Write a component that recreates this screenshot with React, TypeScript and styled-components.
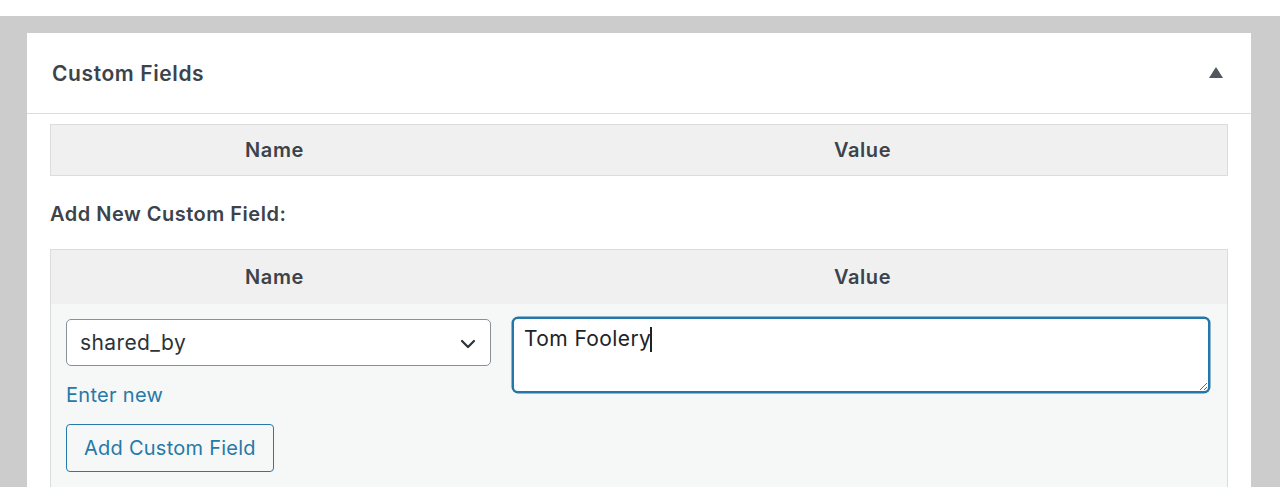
import React, { useEffect, useRef } from "react";
import styled, { createGlobalStyle } from "styled-components";

const FONT = `Inter, "Noto Sans", "Liberation Sans", sans-serif`;

const Global = createGlobalStyle`
  html, body { margin: 0; padding: 0; background: #fff; }
  body { font-family: ${FONT}; color: #3c434a; }
  * { box-sizing: border-box; }
`;

const Page = styled.div`
  padding-top: 16px;
  background: #fff;
`;

const Backdrop = styled.div`
  background: #cccccc;
  padding: 17px 29px 0 27px;
  height: 471px;
  overflow: hidden;
`;

const Panel = styled.section`
  background: #fff;
  height: 100%;
  display: flex;
  flex-direction: column;
`;

const PanelHeader = styled.header`
  height: 81px;
  flex: none;
  border-bottom: 1px solid #dcdcde;
  display: flex;
  align-items: center;
  justify-content: space-between;
  padding: 0 28px 0 25px;
`;

const Title = styled.h2`
  margin: 0;
  font-size: 21px;
  font-weight: 600;
  color: #3c434a;
  letter-spacing: 0.6px;
`;

const Toggle = styled.svg`
  width: 14px;
  height: 11px;
  display: block;
  margin-top: -2px;
`;

const PanelBody = styled.div`
  padding: 10px 23px 0 23px;
  flex: 1;
  display: flex;
  flex-direction: column;
`;

const Table = styled.div<{ $open?: boolean }>`
  border: 1px solid #dcdcde;
  ${(p) => (p.$open ? "border-bottom: none; flex: 1;" : "")}
  display: flex;
  flex-direction: column;
`;

const HeadRow = styled.div<{ $h: number }>`
  display: grid;
  grid-template-columns: 447px 1fr;
  height: ${(p) => p.$h}px;
  background: #f0f0f1;
  align-items: center;
`;

const HeadCell = styled.div`
  text-align: center;
  font-size: 20px;
  font-weight: 600;
  letter-spacing: 0.6px;
  color: #3c434a;
`;

const SubTitle = styled.p`
  margin: 0;
  height: 73px;
  display: flex;
  align-items: center;
  font-size: 20px;
  font-weight: 600;
  letter-spacing: 0.5px;
  color: #3c434a;
  padding-top: 2px;
`;

const BodyRow = styled.div`
  flex: 1;
  background: #f6f7f7;
  display: grid;
  grid-template-columns: 432px 1fr;
  padding: 13px 17px 0 15px;
`;

const NameCell = styled.div`
  display: flex;
  flex-direction: column;
  align-items: flex-start;
  padding-top: 2px;
`;

const SelectBox = styled.div`
  position: relative;
  width: 425px;
  height: 47px;
  border: 1px solid #8c8f94;
  border-radius: 5px;
  background: #fff;
  display: flex;
  align-items: center;
  padding: 0 13px;
  font-size: 21px;
  letter-spacing: 0.4px;
  color: #2c3338;
`;

const Chevron = styled.svg`
  position: absolute;
  right: 14px;
  top: 50%;
  width: 16px;
  height: 10px;
  margin-top: -4px;
`;

const EnterNew = styled.a`
  margin-top: 17px;
  font-size: 20px;
  letter-spacing: 0.3px;
  color: #2679a8;
  text-decoration: none;
  line-height: 24px;
`;

const AddButton = styled.button`
  margin-top: 17px;
  height: 48px;
  padding: 0 17px;
  border: 1px solid #2679a8;
  border-radius: 4px;
  background: #f6f7f7;
  color: #2679a8;
  font-family: ${FONT};
  font-size: 20px;
  letter-spacing: 0.25px;
  cursor: pointer;
`;

const ValueCell = styled.div`
  padding-left: 14px;
`;

const Field = styled.div`
  position: relative;
`;

const TextArea = styled.textarea`
  display: block;
  width: 100%;
  height: 76px;
  border: 2px solid #2477a8;
  box-shadow: 0 0 0 0.5px #2477a8;
  border-radius: 6px;
  outline: none;
  background: #fff;
  padding: 7px 10px;
  font-family: ${FONT};
  font-size: 21px;
  letter-spacing: 0.4px;
  line-height: 26px;
  color: #1d2327;
  caret-color: transparent;
  resize: vertical;
`;

const CaretLayer = styled.div`
  position: absolute;
  top: 9px;
  left: 12px;
  font-family: ${FONT};
  font-size: 21px;
  letter-spacing: 0.4px;
  line-height: 26px;
  pointer-events: none;
  display: flex;
  align-items: center;
`;

const Ghost = styled.span`
  color: transparent;
`;

const Caret = styled.span`
  display: inline-block;
  width: 1.5px;
  height: 25px;
  background: #1d2327;
  margin-left: -1px;
`;

export default function App() {
  const ref = useRef<HTMLTextAreaElement>(null);
  const value = "Tom Foolery";
  useEffect(() => {
    const el = ref.current;
    if (el) {
      el.focus();
      el.setSelectionRange(el.value.length, el.value.length);
    }
  }, []);
  return (
    <>
      <Global />
      <Page>
        <Backdrop>
          <Panel>
            <PanelHeader>
              <Title>Custom Fields</Title>
              <Toggle viewBox="0 0 14 11">
                <path d="M7 0 L14 11 L0 11 Z" fill="#50575e" />
              </Toggle>
            </PanelHeader>
            <PanelBody>
              <Table>
                <HeadRow $h={50}>
                  <HeadCell>Name</HeadCell>
                  <HeadCell>Value</HeadCell>
                </HeadRow>
              </Table>
              <SubTitle>Add New Custom Field:</SubTitle>
              <Table $open>
                <HeadRow $h={54}>
                  <HeadCell>Name</HeadCell>
                  <HeadCell>Value</HeadCell>
                </HeadRow>
                <BodyRow>
                  <NameCell>
                    <SelectBox>
                      shared_by
                      <Chevron viewBox="0 0 16 10">
                        <path d="M2 2 L8 8 L14 2" fill="none" stroke="#2c3338" strokeWidth="2.2" strokeLinecap="round" strokeLinejoin="round" />
                      </Chevron>
                    </SelectBox>
                    <EnterNew href="#">Enter new</EnterNew>
                    <AddButton>Add Custom Field</AddButton>
                  </NameCell>
                  <ValueCell>
                    <Field>
                      <TextArea ref={ref} defaultValue={value} />
                      <CaretLayer>
                        <Ghost>{value}</Ghost>
                        <Caret />
                      </CaretLayer>
                    </Field>
                  </ValueCell>
                </BodyRow>
              </Table>
            </PanelBody>
          </Panel>
        </Backdrop>
      </Page>
    </>
  );
}
